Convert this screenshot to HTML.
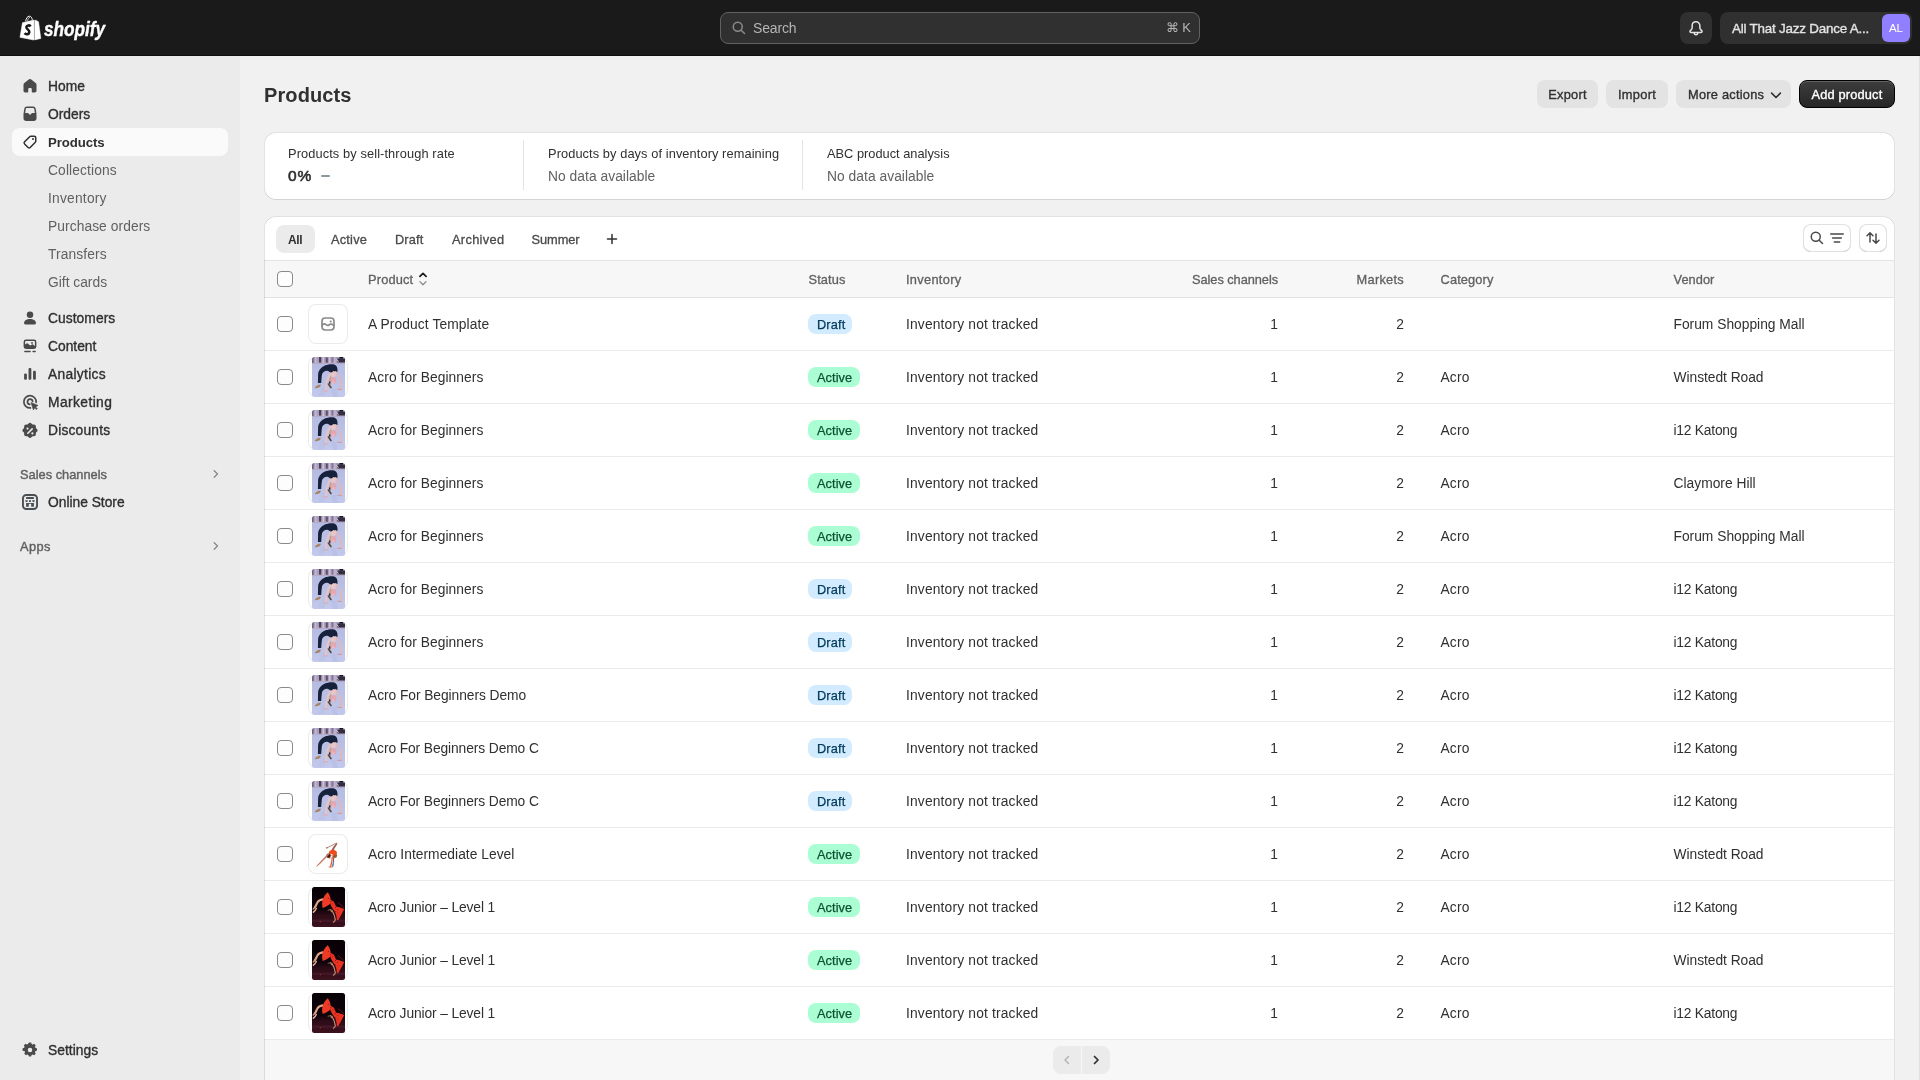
<!DOCTYPE html>
<html lang="en">
<head>
<meta charset="utf-8">
<title>Products</title>
<style>
*{box-sizing:border-box;margin:0;padding:0}
html,body{width:1920px;height:1080px;overflow:hidden;background:#f1f1f1;font-family:"Liberation Sans",sans-serif;color:#303030;font-size:13.5px}
svg{display:block}
/* top bar */
#top{will-change:transform;position:absolute;left:0;top:0;width:1920px;height:56px;background:#1a1a1a;box-shadow:inset 0 -1px 0 #0e0e0e}
#logo{position:absolute;left:18px;top:12px}
#word{-webkit-text-stroke:.4px #fff;position:absolute;left:44px;top:15px;font-size:20px;line-height:28px;font-weight:700;font-style:italic;color:#fff;transform:scaleX(.86);transform-origin:0 0;white-space:nowrap}
#search{position:absolute;left:720px;top:12px;width:480px;height:32px;border-radius:8px;background:#303030;border:1px solid #616161}
#search svg{position:absolute;left:8px;top:5px}
#search .ph{position:absolute;left:32px;top:0;line-height:30px;font-size:14px;color:#b5b5b5}
#search .kb{position:absolute;right:8px;top:0;line-height:30px;font-size:13px;color:#b5b5b5}
#bell{position:absolute;left:1680px;top:12px;width:32px;height:32px;border-radius:8px;background:#303030}
#store{position:absolute;left:1720px;top:12px;width:192px;height:32px;border-radius:8px;background:#303030}
#store .nm{position:absolute;left:12px;top:1px;line-height:32px;font-size:13.4px;font-weight:400;-webkit-text-stroke:.35px #e3e3e3;color:#e3e3e3;white-space:nowrap}
#store .av{position:absolute;right:2px;top:2px;width:28px;height:28px;border-radius:6px;background:#9080ff;color:#fff;font-size:11.5px;line-height:28px;text-align:center}
/* sidebar */
#side{will-change:transform;position:absolute;left:0;top:56px;width:240px;height:1024px;background:#ebebeb}
.nav{position:absolute;left:12px;width:216px;height:28px;border-radius:8px}
.nav.sel{background:#fafafa}
.nav .t{position:absolute;left:36px;top:1px;line-height:28px;font-size:13.8px;font-weight:400;-webkit-text-stroke:.35px #303030;color:#303030;white-space:nowrap}
.nav.sel .t{font-size:13.2px;font-weight:700;-webkit-text-stroke:0}
.nav.sub .t{font-weight:400;color:#616161;font-size:13.8px;-webkit-text-stroke:0}
.nav svg{position:absolute;left:8px;top:4px}
.sec{position:absolute;left:20px;font-size:12.8px;font-weight:400;-webkit-text-stroke:.4px #616161;color:#616161;line-height:16px;white-space:nowrap}
/* main */
h1{position:absolute;left:264px;top:83px;font-size:20px;line-height:24px;font-weight:700;color:#303030;letter-spacing:-.1px}
.btn{position:absolute;top:80px;height:28px;border-radius:8px;background:#e3e3e3;font-size:12.8px;font-weight:400;-webkit-text-stroke:.35px currentColor;color:#303030;line-height:30px;text-align:center;white-space:nowrap}
.btn.pri{background:linear-gradient(#3d3d3d,#262626);color:#fff;border:1px solid #000;line-height:28px;box-shadow:inset 0 1px 0 rgba(255,255,255,.2)}
.card{position:absolute;background:#fff;border-radius:12px;overflow:hidden}
.card:after{content:'';position:absolute;left:0;top:0;right:0;bottom:0;border-radius:12px;pointer-events:none;box-shadow:inset 1px 0 0 rgba(0,0,0,.11),inset -1px 0 0 rgba(0,0,0,.11),inset 0 -1px 0 rgba(0,0,0,.17),inset 0 1px 0 rgba(190,190,190,.45)}
.st{position:absolute;top:0;height:67px}
.st .a{position:absolute;left:0;top:14px;font-size:12.8px;line-height:16px;color:#303030;white-space:nowrap}
.st .b{position:absolute;left:0;top:36px;font-size:13.8px;line-height:18px;color:#616161;white-space:nowrap}
.st .b.big{color:#303030;font-weight:400;-webkit-text-stroke:.6px #303030;font-size:15.5px;top:35px}
.vr{position:absolute;top:8px;width:1px;height:50px;background:#e3e3e3}
/* table */
.tab{position:absolute;top:9px;height:28px;line-height:30px;font-size:12.8px;font-weight:400;-webkit-text-stroke:.3px currentColor;color:#4a4a4a;white-space:nowrap;border-radius:8px;padding:0 12px}
.tab.on{background:#ebebeb;color:#303030;font-size:12px;font-weight:700;-webkit-text-stroke:0}
.hl{position:absolute;left:0;width:1630px;height:1px;background:#e3e3e3}
#thead{position:absolute;left:0;top:45px;width:1630px;height:36px;background:#f7f7f7}
#thead span.h{position:absolute;top:1px;line-height:36px;font-size:12.8px;font-weight:400;-webkit-text-stroke:.3px #616161;color:#616161;white-space:nowrap}
.cb{position:absolute;left:13px;width:16px;height:16px;border:1px solid #8a8a8a;border-radius:4px;background:#fdfdfd}
.row{position:absolute;left:0;width:1630px;height:53px;border-bottom:1px solid #ebebeb;background:#fff}
.row .cb{top:18px}
.row .c{position:absolute;top:1px;line-height:52px;white-space:nowrap;font-size:13.8px;color:#303030}
.row .nm{left:104px}
.row .inv{left:642px}
.row .n1{right:616px}
.row .n2{right:490px}
.row .cat{left:1176.500px}
.row .ven{left:1409.500px}
.th{position:absolute;left:44px;top:6px;width:40px;height:40px;border-radius:8px}
.th.bd{box-shadow:inset 0 0 0 1px #ebebeb}
.th .im{position:absolute;left:4px;top:0}
.bg{position:absolute;left:544px;top:16px;height:20px;line-height:21px;border-radius:8px;font-size:12.8px;font-weight:400;-webkit-text-stroke:.25px currentColor;padding:0 0 0 9px;white-space:nowrap}
.bg.draft{width:44px}.bg.active{width:52px}
.bg.draft{background:#d2ebff;color:#003a5a}
.bg.active{background:#abfdd3;color:#0c5132}
#foot{position:absolute;left:0;top:824px;width:1630px;height:60px;background:#f7f7f7}
.pg{position:absolute;top:6px;height:28px;width:28px;background:#ebebeb}
.ib{position:absolute;top:8px;height:28px;border-radius:8px;background:#fff;box-shadow:inset 0 0 0 1px #e0e0e0, inset 0 -1px 0 #b8b8b8}

#main{position:absolute;left:0;top:0;width:1920px;height:1080px;will-change:transform;overflow:hidden}
.md{font-weight:400!important;-webkit-text-stroke:.35px currentColor}
.ib svg{position:absolute;top:4px}
#tbl:after{bottom:-16px}
</style>
</head>
<body>
<svg width="0" height="0" style="position:absolute">
<defs>
<filter id="bl" x="-10%" y="-10%" width="120%" height="120%"><feGaussianBlur stdDeviation="0.55"/></filter>
<filter id="bl2" x="-10%" y="-10%" width="120%" height="120%"><feGaussianBlur stdDeviation="0.3"/></filter>
<linearGradient id="gA" x1="0" y1="0" x2="0" y2="1"><stop offset="0" stop-color="#b3b8de"/><stop offset="1" stop-color="#c2c9ec"/></linearGradient>
<linearGradient id="gC" x1="0" y1="0" x2="0" y2="1"><stop offset="0" stop-color="#070106"/><stop offset=".55" stop-color="#0d030a"/><stop offset=".7" stop-color="#2c0b17"/><stop offset="1" stop-color="#3c121e"/></linearGradient>
<clipPath id="cpI"><rect x="0" y="0" width="33" height="40" rx="2.500"/></clipPath>
<symbol id="thA" viewBox="0 0 33 40">
 <g clip-path="url(#cpI)">
 <rect width="33" height="40" fill="url(#gA)"/>
 <g filter="url(#bl)">
  <rect x="-1" y="-1" width="35" height="7.300" fill="#a89dbf"/>
  <rect x="-1" y="4.600" width="35" height="1.800" fill="#b4a3bb"/>
  <rect x="0" y="0" width="1.600" height="6" fill="#6c6284"/><rect x="3.200" y="0" width="1.200" height="6" fill="#cdbdd0"/>
  <rect x="7" y="0" width="2.200" height="5.600" fill="#4a4459"/><rect x="10.600" y="0" width="1.400" height="6" fill="#d6c2d2"/>
  <rect x="13.800" y="0.500" width="2" height="5.200" fill="#5a5268"/><rect x="17" y="0" width="1.400" height="6" fill="#d2c0d4"/>
  <rect x="19.600" y="0" width="1.600" height="5.500" fill="#80759a"/><rect x="22.300" y="0" width="1.300" height="6" fill="#cbb9cf"/>
  <rect x="25.500" y="1.500" width="7.500" height="4" fill="#322e40"/><rect x="27.500" y="-1" width="3.500" height="2.600" fill="#14131c"/>
  <path d="M24.300 2.500l2.500 2" stroke="#e8dce8" stroke-width=".800"/>
  <!-- floor reflections -->
  <path d="M9 30l-3 9h6l3-9Z" fill="#b9c1e6" opacity=".7"/><path d="M19 32l2 8h5l-2-8Z" fill="#b6bde2" opacity=".6"/>
  <!-- dark body arch -->
  <path d="M5.900 26 6.100 17.200c.3-3.800 3.200-7 6.800-8.600 2.800-1.300 6.400-1.900 9.300-1.100 2 .600 3.100 2.600 3.300 4.900l-.1 2.700c-1.500.400-2.600-.300-3.900-.400l-2.500 1.900c-.9-1.400-2.300-2.600-3.900-2.800-2.200-.200-4.200 1.100-5 3.200-.6 2.900-.6 6-.9 9Z" fill="#18203a"/>
  <!-- skin arms -->
  <path d="M23.800 15c2.100 2.500 3.800 6.300 4.900 10.200.6 2.200.9 4.500.7 6.800" fill="none" stroke="#dfb8bc" stroke-width="1.900" stroke-linecap="round"/>
  <path d="M18.300 16.200c-1.500 2.500-2.700 5.700-3.400 9-.5 2.600-.9 5.400-1.100 8.200" fill="none" stroke="#e6c4c4" stroke-width="1.900" stroke-linecap="round"/>
  <path d="M19 15.800l2.600-1.800 2.600 1-.9 4.800h-4Z" fill="#e8c6c6"/>
  <!-- head + hair -->
  <path d="M18.400 19.200c-1.200 2-1.500 4.800-.7 7l1.800-1.500-.2-5Z" fill="#bfa07e"/>
  <ellipse cx="21.500" cy="23.400" rx="2.900" ry="3.300" fill="#e2a7b2"/>
  <ellipse cx="21.300" cy="25.300" rx="1.700" ry="1.100" fill="#eeb9c2"/>
  <path d="M16.900 24.400c0 1.500.500 2.500 1.500 3v-3Z" fill="#1c2238"/>
  <!-- feet/hands -->
  <path d="M2.900 30.400c1.500-1.700 3.600-2.700 5.700-2.800.6 1.400-.5 2.400-1.600 2.800-1.300.600-2.700.9-4.100.8Z" fill="#a98464"/>
  <path d="M16.400 27c1 1.300 2 2.500 2.600 3.600" fill="none" stroke="#5a4232" stroke-width="1.600" stroke-linecap="round"/>
  <path d="M11.800 33.800h3.600" stroke="#d8aeb4" stroke-width="1.300" stroke-linecap="round"/>
  <path d="M25.800 32.400h3.400" stroke="#cf9ea6" stroke-width="1.300" stroke-linecap="round"/>
 </g>
 </g>
</symbol>
<symbol id="thB" viewBox="0 0 40 40">
 <g filter="url(#bl2)">
  <path d="M22.600 17.600c1.300-2.900 3.400-5.800 5.300-8.300.5-.7 1.400-.9 1.500-.3.100.7-.3 1.400-.7 2-1.500 2.300-2.900 4.700-3.900 7.200Z" fill="#a06254"/>
  <path d="M18.300 13.900c2.700-.900 5.900-2.400 9-4.400" fill="none" stroke="#b0766a" stroke-width=".900" stroke-linecap="round"/>
  <path d="M18 13.300l2.200.2-.3 1-2.100-.2Z" fill="#b87a6c"/>
  <ellipse cx="26.700" cy="21.500" rx="2.400" ry="2.500" fill="#8f5e2c"/>
  <path d="M21.200 17.500c2.100-1.900 5.300-1.900 7.300-.1.800.800.700 2-.1 2.700l-3.300 2.100c-1.300-.100-2.700-1.100-3.700-2.300-.6-.7-.7-1.800-.2-2.400Z" fill="#f2481a"/>
  <path d="M22.700 19.600l2.600 1.400-1.300.8-2.100-1.200Z" fill="#fff5f0"/>
  <ellipse cx="20.600" cy="21.700" rx="2.200" ry="2.300" fill="#45180a"/>
  <path d="M20.600 24c.6.400 1.300.5 2 .2" fill="none" stroke="#c27a68" stroke-width=".900"/>
  <path d="M20.300 19.300c-3.600 3.700-7.600 8.300-11.700 12.500-.5.500-.2 1 .4.700 4.400-3.700 8.600-8 12.400-12.300Z" fill="#c27868"/>
  <path d="M24.300 23.200c-.2 3.300-.9 6.500-1.800 9.500" fill="none" stroke="#ee5634" stroke-width="1.300" stroke-linecap="round"/>
  <path d="M25.600 23.800c.3 2.800-.1 5.900-1.100 8.700" fill="none" stroke="#7a5e62" stroke-width="1.100" stroke-linecap="round"/>
  <path d="M25.500 28.600c0 1.200-.3 2.500-.8 3.700" fill="none" stroke="#5c96c8" stroke-width="1.300" stroke-linecap="round"/>
  <path d="M21 33h3.300" stroke="#e8765e" stroke-width="1" stroke-linecap="round"/>
 </g>
</symbol>
<symbol id="thC" viewBox="0 0 33 40">
 <g clip-path="url(#cpI)">
 <rect width="33" height="40" fill="url(#gC)"/>
 <g filter="url(#bl)">
  <rect x="-1" y="32.500" width="35" height="2.600" fill="#46182a" opacity=".8"/>
  <path d="M26 15.500l6 5.200" stroke="#8a1220" stroke-width=".800"/>
  <!-- arms / upper body skin -->
  <path d="M11 12.400c-2.300.3-4.600 1.200-5.600 3-.9 1.800-1.500 3.600-2.700 5.100" fill="none" stroke="#e0a488" stroke-width="2.100" stroke-linecap="round"/>
  <path d="M3.500 19.500c-.8 1.200-1.600 1.900-2.300 2.500" fill="none" stroke="#dc9e84" stroke-width="1.200" stroke-linecap="round"/>
  <path d="M4.300 21.500c-.7 1.600-1.800 2.800-2.900 3.700" fill="none" stroke="#e4b094" stroke-width="1.500" stroke-linecap="round"/>
  <!-- red skirt upper -->
  <path d="M15.800 5.200c1.700 2.300 2.800 5.200 3 8.200-.1 1.300-.4 2.600-.9 3.600-2 1.700-4.600 3-7.100 3.900-.9-2.400-.9-5.300-.1-8.100.9-3 2.800-5.800 5.100-7.600Z" fill="#ee3a26"/>
  <!-- red body lower -->
  <path d="M17.600 12.900c2.300-.1 4 1.100 5 3.100.5 1.200.8 2.500 1.400 3.500 2.700.5 5.500 1.400 8.200 2.400-1.400 3.400-3.700 7.100-5.900 11l-1.500.3c.1-3.700-.8-7.100-2.600-9.500-1.300-1.600-2.600-3.600-3.300-5.500-.7-1.800-1.400-3.700-1.300-5.300Z" fill="#e93322"/>
  <circle cx="16.300" cy="11.500" r=".550" fill="#8a1a14"/><circle cx="18.800" cy="14.600" r=".550" fill="#8a1a14"/><circle cx="20.800" cy="16.800" r=".500" fill="#8a1a14"/><circle cx="23.500" cy="20.600" r=".600" fill="#8a1a14"/><circle cx="25.600" cy="22.500" r=".500" fill="#8a1a14"/><circle cx="23.700" cy="24.300" r=".500" fill="#8a1a14"/><circle cx="26" cy="26" r=".450" fill="#8a1a14"/>
  <!-- leg -->
  <path d="M19.700 23.200c1.800 2.500 3.100 5.800 3.600 9.500 0 1-.9 1.900-1.900 2.500" fill="none" stroke="#c48e70" stroke-width="1.200" stroke-linecap="round"/>
  <path d="M16.200 23.200c.4-.4 1-.5 1.600-.3" stroke="#6a5030" stroke-width="1.300" stroke-linecap="round"/>
  <path d="M18.600 22.600c.5.600.8 1.300.8 2" stroke="#b88a68" stroke-width="1.200" stroke-linecap="round"/>
  <circle cx="8.300" cy="34.600" r=".600" fill="#c03a28"/>
 </g>
 </g>
</symbol>
<symbol id="shbag" viewBox="18 12 26 30">
 <path d="M25.700 21.300c.2-2.900 1.800-5.100 3.700-5.100 1.500 0 2.600 1.400 2.900 3.600" fill="none" stroke="#fff" stroke-width="1"/>
 <path d="M27.600 20.800c.3-1.900 1.200-3.300 2.400-3.500" fill="none" stroke="#fff" stroke-width=".800"/>
 <path d="M22.500 22.700 33.950 20.100V40L20 37.300Z" fill="#fff" stroke="#fff" stroke-width=".600" stroke-linejoin="round"/>
 <path d="M34.700 20.100 36.500 20.400 38.600 21.800 40.900 38.500 34.700 39.950Z" fill="#fff" stroke="#fff" stroke-width=".400" stroke-linejoin="round"/>
 <path d="M30.700 26.400c-1.100-1.300-3.900-1.500-4.300.6-.4 2.200 3.300 2.600 2.900 5.200-.4 2.400-3.400 2.500-4.700 1" fill="none" stroke="#1a1a1a" stroke-width="2.600"/>
</symbol>
</defs>
</svg>

<div id="top">
  <svg id="logo" width="26" height="30" viewBox="0 0 26 30"><use href="#shbag"/></svg>
  <div id="word">shopify</div>
  <div id="search"><svg width="20" height="20" viewBox="0 0 20 20" fill="none"><circle cx="8.750" cy="8.750" r="4.500" stroke="#8a8a8a" stroke-width="1.500"/><path d="m12.200 12.200 3.300 3.300" stroke="#8a8a8a" stroke-width="1.500" stroke-linecap="round"/></svg><span class="ph" style="letter-spacing:-0.14px">Search</span><span class="kb">⌘ K</span></div>
  <div id="bell"><svg width="20" height="20" viewBox="0 0 20 20" fill="none" style="position:absolute;left:6px;top:6px"><path d="M10 3.850c-2.300 0-3.850 1.750-3.850 4v1.900c0 .700-.300 1.300-.750 1.800l-1.100 1.100c-.700.700-.200 1.850.800 1.850h9.800c1 0 1.500-1.150.800-1.850l-1.100-1.100a2.600 2.600 0 0 1-.750-1.800V7.850c0-2.250-1.550-4-3.850-4Z" stroke="#e3e3e3" stroke-width="1.500" stroke-linejoin="round"/><path d="M8.100 14.900c.200 1.100.950 1.900 1.900 1.900s1.700-.800 1.900-1.900" stroke="#e3e3e3" stroke-width="1.500" stroke-linecap="round"/></svg></div>
  <div id="store"><span class="nm" style="letter-spacing:-0.2px">All That Jazz Dance A...</span><span class="av">AL</span></div>
</div>
<div id="side">
<div class="nav" style="top:16px"><svg width="20" height="20" viewBox="0 0 20 20" fill="#4a4a4a" ><path d="M10.92 3.26a1.5 1.5 0 0 0-1.84 0L4.33 6.95A2.15 2.15 0 0 0 3.5 8.65v6.1c0 .97.78 1.75 1.75 1.75H7.5a.75.75 0 0 0 .75-.75V13a1 1 0 0 1 1-1h1.5a1 1 0 0 1 1 1v2.75c0 .41.34.75.75.75h2.25c.97 0 1.75-.78 1.75-1.75v-6.1c0-.66-.31-1.29-.83-1.7l-4.75-3.69Z"/></svg><span class="t" style="letter-spacing:0.08px">Home</span></div>
<div class="nav" style="top:44px"><svg width="20" height="20" viewBox="0 0 20 20" fill="#4a4a4a" ><path fill-rule="evenodd" d="M4.26 4.85A2.75 2.75 0 0 1 6.98 2.5h6.04a2.75 2.75 0 0 1 2.72 2.35l.66 4.46c.06.42.1.85.1 1.28v3.66A2.75 2.75 0 0 1 13.75 17h-7.5a2.75 2.75 0 0 1-2.75-2.75v-3.66c0-.43.03-.86.1-1.28l.66-4.46ZM6.98 4c-.62 0-1.15.45-1.24 1.07L5.16 9h2.48c.54 0 1.02.34 1.19.85l.16.48c.03.1.13.17.23.17h1.56c.1 0 .2-.07.24-.17l.15-.48c.17-.5.65-.85 1.19-.85h2.48l-.58-3.93A1.25 1.25 0 0 0 13.02 4H6.98Z"/></svg><span class="t">Orders</span></div>
<div class="nav sel" style="top:72px"><svg width="20" height="20" viewBox="0 0 20 20" fill="none" ><path d="M10.75 4.25h3.5c.83 0 1.5.67 1.5 1.5v3.5c0 .4-.16.78-.44 1.06l-5.1 5.1a1.5 1.5 0 0 1-2.12 0l-3.5-3.5a1.5 1.5 0 0 1 0-2.12l5.1-5.1c.28-.28.66-.44 1.06-.44Z" fill="none" stroke="#303030" stroke-width="1.5"/><circle cx="13" cy="7" r="1" fill="#303030"/></svg><span class="t" style="letter-spacing:-0.07px">Products</span></div>
<div class="nav sub" style="top:100px"><span class="t" style="letter-spacing:0.12px">Collections</span></div>
<div class="nav sub" style="top:128px"><span class="t" style="letter-spacing:0.22px">Inventory</span></div>
<div class="nav sub" style="top:156px"><span class="t" style="letter-spacing:0.07px">Purchase orders</span></div>
<div class="nav sub" style="top:184px"><span class="t" style="letter-spacing:0.12px">Transfers</span></div>
<div class="nav sub" style="top:212px"><span class="t">Gift cards</span></div>
<div class="nav" style="top:248px"><svg width="20" height="20" viewBox="0 0 20 20" fill="#4a4a4a" ><circle cx="10" cy="6.75" r="3.25"/><path d="M4 15.1c0-2.5 2.7-4.1 6-4.1s6 1.6 6 4.1c0 .77-.63 1.4-1.4 1.4H5.4c-.77 0-1.4-.63-1.4-1.4Z"/></svg><span class="t" style="letter-spacing:0.06px">Customers</span></div>
<div class="nav" style="top:276px"><svg width="20" height="20" viewBox="0 0 20 20" fill="#4a4a4a" ><path fill-rule="evenodd" d="M6 3.500A2.400 2.400 0 0 0 3.600 5.900v4.600A2.400 2.400 0 0 0 6 12.900h8a2.400 2.400 0 0 0 2.400-2.400V5.900A2.400 2.400 0 0 0 14 3.500H6ZM5.100 8.600l1.500-1.200a.9.900 0 0 1 1.150 0l2.350 2.200 1.900-1.200a.9.900 0 0 1 1.050.1l1.850 1.500V5.900c0-.5-.4-.9-.9-.9H6c-.5 0-.9.400-.9.900v2.700Zm7.800-1.700a.9.900 0 1 1-1.800 0 .9.900 0 0 1 1.800 0Z"/><rect x="4.100" y="14.850" width="6.700" height="1.500" rx=".750"/><rect x="12.300" y="14.850" width="3.600" height="1.500" rx=".750"/></svg><span class="t">Content</span></div>
<div class="nav" style="top:304px"><svg width="20" height="20" viewBox="0 0 20 20" fill="#4a4a4a" ><rect x="4.100" y="9.600" width="2.800" height="6.200" rx="1.100"/><rect x="8.550" y="4" width="2.800" height="11.800" rx="1.100"/><rect x="13.050" y="6.800" width="2.800" height="9" rx="1.100"/></svg><span class="t" style="letter-spacing:0.31px">Analytics</span></div>
<div class="nav" style="top:332px"><svg width="20" height="20" viewBox="0 0 20 20" fill="#4a4a4a" ><path d="M16.150 10.300A6.150 6.150 0 1 0 10.400 15.950" fill="none" stroke="#4a4a4a" stroke-width="1.700" stroke-linecap="round"/><path d="M12.650 9.500A2.600 2.600 0 1 0 9.800 12.400" fill="none" stroke="#4a4a4a" stroke-width="1.700" stroke-linecap="round"/><path d="M11 10.500 18 13.400 15.600 14.900 17.300 16.800 16.300 17.500 14.600 15.800 13.400 18Z" stroke="#4a4a4a" stroke-width=".600" stroke-linejoin="round"/></svg><span class="t" style="letter-spacing:0.41px">Marketing</span></div>
<div class="nav" style="top:360px"><svg width="20" height="20" viewBox="0 0 20 20" fill="#4a4a4a" ><path transform="translate(10 11) scale(1.07) translate(-10 -10)" fill-rule="evenodd" d="M11.570 3.170a2.100 2.100 0 0 0-3.140 0l-.5.560a.6.600 0 0 1-.480.200l-.750-.04A2.100 2.100 0 0 0 4.480 6.100l.04.750a.6.600 0 0 1-.2.480l-.560.500a2.100 2.100 0 0 0 0 3.140l.560.500a.6.600 0 0 1 .2.480l-.04.750a2.100 2.100 0 0 0 2.220 2.220l.750-.04a.6.600 0 0 1 .480.200l.5.560a2.100 2.100 0 0 0 3.140 0l.5-.560a.6.600 0 0 1 .480-.2l.750.040a2.100 2.100 0 0 0 2.220-2.220l-.04-.750a.6.600 0 0 1 .2-.480l.560-.5a2.100 2.100 0 0 0 0-3.140l-.560-.5a.6.600 0 0 1-.2-.480l.04-.750A2.100 2.100 0 0 0 13.300 3.880l-.750.040a.6.600 0 0 1-.480-.2l-.5-.550ZM8.700 7.750a1 1 0 1 1-2 0 1 1 0 0 1 2 0Zm3.830-.22a.75.750 0 0 1 0 1.060l-4 4a.75.750 0 1 1-1.060-1.060l4-4a.75.750 0 0 1 1.060 0Zm-.280 5.720a1 1 0 1 0 0-2 1 1 0 0 0 0 2Z"/></svg><span class="t" style="letter-spacing:0.19px">Discounts</span></div>
<div class="sec" style="top:411px;letter-spacing:0.01px">Sales channels</div><svg style="position:absolute;left:206px;top:408px" width="20" height="20" viewBox="0 0 20 20" fill="none"><path d="M8.250 6.750 11.500 10l-3.250 3.250" stroke="#8a8a8a" stroke-width="1.400" stroke-linecap="round" stroke-linejoin="round"/></svg>
<div class="nav" style="top:432px"><svg width="20" height="20" viewBox="0 0 20 20" fill="none" ><rect x="2.950" y="2.950" width="14.100" height="14.100" rx="3.400" fill="none" stroke="#4a4f53" stroke-width="1.900"/><rect x="6" y="5.100" width="8" height="1.800" rx=".400" fill="#4a4f53"/><path d="M5.100 8.200h2.800l-.600 1.700h-1.500ZM9 8.200h2v1.700h-2ZM12.100 8.200h2.800l-.700 1.700h-1.500Z" fill="#4a4f53"/><path d="M6.100 11h7.800v3.700h-2.700v-2.300a.6.600 0 0 0-.600-.600h-1.200a.6.600 0 0 0-.600.600v2.300h-2.700Z" fill="#4a4f53"/></svg><span class="t" style="letter-spacing:-0.01px">Online Store</span></div>
<div class="sec" style="top:483px;letter-spacing:0.37px">Apps</div><svg style="position:absolute;left:206px;top:480px" width="20" height="20" viewBox="0 0 20 20" fill="none"><path d="M8.250 6.750 11.500 10l-3.250 3.250" stroke="#8a8a8a" stroke-width="1.400" stroke-linecap="round" stroke-linejoin="round"/></svg>
<div class="nav" style="top:980px"><svg width="20" height="20" viewBox="0 0 20 20" fill="#4a4a4a" ><path fill-rule="evenodd" d="M8.500 3.500a1 1 0 0 1 1-1h1a1 1 0 0 1 1 1v.600c.450.120.880.300 1.270.530l.430-.430a1 1 0 0 1 1.410 0l.710.710a1 1 0 0 1 0 1.410l-.430.430c.230.390.410.820.530 1.270h.580a1 1 0 0 1 1 1v1a1 1 0 0 1-1 1h-.600c-.120.450-.3.880-.530 1.270l.430.430a1 1 0 0 1 0 1.410l-.710.710a1 1 0 0 1-1.410 0l-.430-.430c-.390.230-.820.410-1.270.530v.580a1 1 0 0 1-1 1h-1a1 1 0 0 1-1-1v-.600a5.200 5.200 0 0 1-1.270-.530l-.430.430a1 1 0 0 1-1.410 0l-.710-.710a1 1 0 0 1 0-1.410l.430-.430a5.200 5.200 0 0 1-.530-1.270H3.500a1 1 0 0 1-1-1v-1a1 1 0 0 1 1-1h.600c.120-.450.3-.880.530-1.270l-.430-.430a1 1 0 0 1 0-1.410l.710-.710a1 1 0 0 1 1.410 0l.430.430c.390-.230.820-.410 1.270-.530V3.500ZM10 12.250a2.250 2.250 0 1 0 0-4.500 2.250 2.250 0 0 0 0 4.500Z"/></svg><span class="t" style="letter-spacing:0.04px">Settings</span></div>
</div>
<div id="main">
<div id="rstrip" style="position:absolute;left:1919px;top:56px;width:1px;height:1024px;background:#e0e0e0"></div>
<h1 style="letter-spacing:0.11px">Products</h1>
<div class="btn" style="left:1537px;width:61px;letter-spacing:0.24px">Export</div>
<div class="btn" style="left:1606px;width:62px;letter-spacing:0.32px">Import</div>
<div class="btn" style="left:1676px;width:115px;text-align:left;padding-left:12px;letter-spacing:0.24px">More actions<svg width="20" height="20" viewBox="0 0 20 20" fill="none" style="position:absolute;left:89.500px;top:5px"><path d="m5.600 8.100 4.400 4.400 4.400-4.400" stroke="#303030" stroke-width="1.600" stroke-linecap="round" stroke-linejoin="round"/></svg></div>
<div class="btn pri" style="left:1799px;width:96px;letter-spacing:0.16px">Add product</div>
<div class="card" id="stats" style="left:264px;top:132px;width:1631px;height:68px">
  <div class="st" style="left:24px"><span class="a" style="letter-spacing:0.11px">Products by sell-through rate</span><span class="b big" style="letter-spacing:.9px">0%</span><span style="position:absolute;left:32.500px;top:43px;width:9.500px;height:1.500px;background:#8a979f;border-radius:1px"></span></div>
  <div class="vr" style="left:259px"></div>
  <div class="st" style="left:284px"><span class="a" style="letter-spacing:0.09px">Products by days of inventory remaining</span><span class="b" style="letter-spacing:0.04px">No data available</span></div>
  <div class="vr" style="left:538px"></div>
  <div class="st" style="left:563px"><span class="a" style="letter-spacing:0.01px">ABC product analysis</span><span class="b" style="letter-spacing:0.04px">No data available</span></div>
</div>
<div class="card" id="tbl" style="left:264px;top:216px;width:1631px;height:864px;border-bottom-left-radius:0;border-bottom-right-radius:0">
  <span class="tab on" style="left:12px;width:39px;letter-spacing:-0.38px">All</span>
  <span class="tab" style="left:55px;letter-spacing:0.2px">Active</span>
  <span class="tab" style="left:119px;letter-spacing:0.12px">Draft</span>
  <span class="tab" style="left:176px;letter-spacing:0.32px">Archived</span>
  <span class="tab" style="left:255.500px;letter-spacing:-0.05px">Summer</span>
  <svg width="20" height="20" viewBox="0 0 20 20" fill="none" style="position:absolute;left:338px;top:13px"><path d="M10 5.500v9M5.500 10h9" stroke="#303030" stroke-width="1.500" stroke-linecap="round"/></svg>
  <div class="ib" style="left:1539px;width:48px"><span style="position:absolute;left:4px;top:0"><svg width="20" height="20" viewBox="0 0 20 20" fill="none"><circle cx="8.750" cy="8.750" r="4.500" stroke="#4a4a4a" stroke-width="1.500"/><path d="m12.200 12.200 3.300 3.300" stroke="#4a4a4a" stroke-width="1.500" stroke-linecap="round"/></svg></span><span style="position:absolute;left:24px;top:0"><svg width="20" height="20" viewBox="0 0 20 20" fill="none"><path d="M3.750 6h12.500M5.600 10h8.800M7.300 14h5.400" stroke="#4a4a4a" stroke-width="1.500" stroke-linecap="round"/></svg></span></div>
  <div class="ib" style="left:1595px;width:28px"><span style="position:absolute;left:4px;top:0"><svg width="20" height="20" viewBox="0 0 20 20" fill="none"><path d="M7 14V4.700m0 0L4 7.700M7 4.700l3 3M13 6v9.300m0 0 3-3m-3 3-3-3" stroke="#4a4a4a" stroke-width="1.500" stroke-linecap="round" stroke-linejoin="round"/></svg></span></div>
  <div class="hl" style="top:44px"></div>
  <div id="thead">
    <span class="cb" style="top:10px"></span>
    <span class="h" style="left:104px;letter-spacing:0.17px">Product</span>
    <svg width="12" height="18" viewBox="0 0 12 18" fill="none" style="position:absolute;left:153px;top:9px"><path d="m2.900 6.400 3.100-3.100 3.100 3.100" stroke="#1a1a1a" stroke-width="1.700" stroke-linecap="round" stroke-linejoin="round"/><path d="m2.900 11.600 3.100 3.100 3.100-3.100" stroke="#8a8a8a" stroke-width="1.300" stroke-linecap="round" stroke-linejoin="round"/></svg>
    <span class="h" style="left:544.500px;letter-spacing:0.1px">Status</span>
    <span class="h" style="left:642px;letter-spacing:0.31px">Inventory</span>
    <span class="h" style="right:616px;letter-spacing:-0.06px">Sales channels</span>
    <span class="h" style="right:490px;letter-spacing:0.27px">Markets</span>
    <span class="h" style="left:1176.500px;letter-spacing:0.14px">Category</span>
    <span class="h" style="left:1409.500px;letter-spacing:0.05px">Vendor</span>
  </div>
  <div class="hl" style="top:81px"></div>
<div class="row" style="top:82px"><span class="cb"></span><span class="th bd"><svg width="20" height="20" viewBox="0 0 20 20" fill="none" style="position:absolute;left:10px;top:10px"><rect x="4" y="4" width="12" height="12" rx="3.200" stroke="#8a8a8a" stroke-width="1.700"/><circle cx="12.700" cy="7.500" r="1.100" fill="#8a8a8a"/><path d="M4.300 11.300c1.300-1.700 2.500-1.900 3.600-.800 1.100 1.100 1.900 1.400 3 .500 1.100-.900 2.800-1.200 4.800.400" stroke="#8a8a8a" stroke-width="1.700" stroke-linecap="round"/></svg></span><span class="c nm" style="letter-spacing:0.1px">A Product Template</span><span class="bg draft" style="letter-spacing:0.12px">Draft</span><span class="c inv" style="letter-spacing:0.17px">Inventory not tracked</span><span class="c n1">1</span><span class="c n2">2</span><span class="c ven">Forum Shopping Mall</span></div>
<div class="row" style="top:135px"><span class="cb"></span><span class="th bd"><svg class="im" width="33" height="40" viewBox="0 0 33 40"><use href="#thA"/></svg></span><span class="c nm" style="letter-spacing:0.06px">Acro for Beginners</span><span class="bg active" style="letter-spacing:0.05px">Active</span><span class="c inv" style="letter-spacing:0.17px">Inventory not tracked</span><span class="c n1">1</span><span class="c n2">2</span><span class="c cat" style="letter-spacing:0.17px">Acro</span><span class="c ven" style="letter-spacing:-0.04px">Winstedt Road</span></div>
<div class="row" style="top:188px"><span class="cb"></span><span class="th bd"><svg class="im" width="33" height="40" viewBox="0 0 33 40"><use href="#thA"/></svg></span><span class="c nm" style="letter-spacing:0.06px">Acro for Beginners</span><span class="bg active" style="letter-spacing:0.05px">Active</span><span class="c inv" style="letter-spacing:0.17px">Inventory not tracked</span><span class="c n1">1</span><span class="c n2">2</span><span class="c cat" style="letter-spacing:0.17px">Acro</span><span class="c ven" style="letter-spacing:-0.22px">i12 Katong</span></div>
<div class="row" style="top:241px"><span class="cb"></span><span class="th bd"><svg class="im" width="33" height="40" viewBox="0 0 33 40"><use href="#thA"/></svg></span><span class="c nm" style="letter-spacing:0.06px">Acro for Beginners</span><span class="bg active" style="letter-spacing:0.05px">Active</span><span class="c inv" style="letter-spacing:0.17px">Inventory not tracked</span><span class="c n1">1</span><span class="c n2">2</span><span class="c cat" style="letter-spacing:0.17px">Acro</span><span class="c ven" style="letter-spacing:0.01px">Claymore Hill</span></div>
<div class="row" style="top:294px"><span class="cb"></span><span class="th bd"><svg class="im" width="33" height="40" viewBox="0 0 33 40"><use href="#thA"/></svg></span><span class="c nm" style="letter-spacing:0.06px">Acro for Beginners</span><span class="bg active" style="letter-spacing:0.05px">Active</span><span class="c inv" style="letter-spacing:0.17px">Inventory not tracked</span><span class="c n1">1</span><span class="c n2">2</span><span class="c cat" style="letter-spacing:0.17px">Acro</span><span class="c ven">Forum Shopping Mall</span></div>
<div class="row" style="top:347px"><span class="cb"></span><span class="th bd"><svg class="im" width="33" height="40" viewBox="0 0 33 40"><use href="#thA"/></svg></span><span class="c nm" style="letter-spacing:0.06px">Acro for Beginners</span><span class="bg draft" style="letter-spacing:0.12px">Draft</span><span class="c inv" style="letter-spacing:0.17px">Inventory not tracked</span><span class="c n1">1</span><span class="c n2">2</span><span class="c cat" style="letter-spacing:0.17px">Acro</span><span class="c ven" style="letter-spacing:-0.22px">i12 Katong</span></div>
<div class="row" style="top:400px"><span class="cb"></span><span class="th bd"><svg class="im" width="33" height="40" viewBox="0 0 33 40"><use href="#thA"/></svg></span><span class="c nm" style="letter-spacing:0.06px">Acro for Beginners</span><span class="bg draft" style="letter-spacing:0.12px">Draft</span><span class="c inv" style="letter-spacing:0.17px">Inventory not tracked</span><span class="c n1">1</span><span class="c n2">2</span><span class="c cat" style="letter-spacing:0.17px">Acro</span><span class="c ven" style="letter-spacing:-0.22px">i12 Katong</span></div>
<div class="row" style="top:453px"><span class="cb"></span><span class="th bd"><svg class="im" width="33" height="40" viewBox="0 0 33 40"><use href="#thA"/></svg></span><span class="c nm" style="letter-spacing:-0.06px">Acro For Beginners Demo</span><span class="bg draft" style="letter-spacing:0.12px">Draft</span><span class="c inv" style="letter-spacing:0.17px">Inventory not tracked</span><span class="c n1">1</span><span class="c n2">2</span><span class="c cat" style="letter-spacing:0.17px">Acro</span><span class="c ven" style="letter-spacing:-0.22px">i12 Katong</span></div>
<div class="row" style="top:506px"><span class="cb"></span><span class="th bd"><svg class="im" width="33" height="40" viewBox="0 0 33 40"><use href="#thA"/></svg></span><span class="c nm" style="letter-spacing:-0.1px">Acro For Beginners Demo C</span><span class="bg draft" style="letter-spacing:0.12px">Draft</span><span class="c inv" style="letter-spacing:0.17px">Inventory not tracked</span><span class="c n1">1</span><span class="c n2">2</span><span class="c cat" style="letter-spacing:0.17px">Acro</span><span class="c ven" style="letter-spacing:-0.22px">i12 Katong</span></div>
<div class="row" style="top:559px"><span class="cb"></span><span class="th bd"><svg class="im" width="33" height="40" viewBox="0 0 33 40"><use href="#thA"/></svg></span><span class="c nm" style="letter-spacing:-0.1px">Acro For Beginners Demo C</span><span class="bg draft" style="letter-spacing:0.12px">Draft</span><span class="c inv" style="letter-spacing:0.17px">Inventory not tracked</span><span class="c n1">1</span><span class="c n2">2</span><span class="c cat" style="letter-spacing:0.17px">Acro</span><span class="c ven" style="letter-spacing:-0.22px">i12 Katong</span></div>
<div class="row" style="top:612px"><span class="cb"></span><span class="th bd"><svg width="40" height="40" viewBox="0 0 40 40"><use href="#thB"/></svg></span><span class="c nm" style="letter-spacing:0.03px">Acro Intermediate Level</span><span class="bg active" style="letter-spacing:0.05px">Active</span><span class="c inv" style="letter-spacing:0.17px">Inventory not tracked</span><span class="c n1">1</span><span class="c n2">2</span><span class="c cat" style="letter-spacing:0.17px">Acro</span><span class="c ven" style="letter-spacing:-0.04px">Winstedt Road</span></div>
<div class="row" style="top:665px"><span class="cb"></span><span class="th bd"><svg class="im" width="33" height="40" viewBox="0 0 33 40"><use href="#thC"/></svg></span><span class="c nm" style="letter-spacing:-0.12px">Acro Junior – Level 1</span><span class="bg active" style="letter-spacing:0.05px">Active</span><span class="c inv" style="letter-spacing:0.17px">Inventory not tracked</span><span class="c n1">1</span><span class="c n2">2</span><span class="c cat" style="letter-spacing:0.17px">Acro</span><span class="c ven" style="letter-spacing:-0.22px">i12 Katong</span></div>
<div class="row" style="top:718px"><span class="cb"></span><span class="th bd"><svg class="im" width="33" height="40" viewBox="0 0 33 40"><use href="#thC"/></svg></span><span class="c nm" style="letter-spacing:-0.12px">Acro Junior – Level 1</span><span class="bg active" style="letter-spacing:0.05px">Active</span><span class="c inv" style="letter-spacing:0.17px">Inventory not tracked</span><span class="c n1">1</span><span class="c n2">2</span><span class="c cat" style="letter-spacing:0.17px">Acro</span><span class="c ven" style="letter-spacing:-0.04px">Winstedt Road</span></div>
<div class="row" style="top:771px"><span class="cb"></span><span class="th bd"><svg class="im" width="33" height="40" viewBox="0 0 33 40"><use href="#thC"/></svg></span><span class="c nm" style="letter-spacing:-0.12px">Acro Junior – Level 1</span><span class="bg active" style="letter-spacing:0.05px">Active</span><span class="c inv" style="letter-spacing:0.17px">Inventory not tracked</span><span class="c n1">1</span><span class="c n2">2</span><span class="c cat" style="letter-spacing:0.17px">Acro</span><span class="c ven" style="letter-spacing:-0.22px">i12 Katong</span></div>

  <div id="foot">
    <div class="pg" style="left:789px;border-radius:8px 0 0 8px"><svg width="20" height="20" viewBox="0 0 20 20" fill="none" style="position:absolute;left:4px;top:4px"><path d="M11.500 6.500 8 10l3.500 3.500" stroke="#b5b5b5" stroke-width="1.500" stroke-linecap="round" stroke-linejoin="round"/></svg></div>
    <div class="pg" style="left:818px;border-radius:0 8px 8px 0"><svg width="20" height="20" viewBox="0 0 20 20" fill="none" style="position:absolute;left:4px;top:4px"><path d="M8.500 6.500 12 10l-3.500 3.500" stroke="#303030" stroke-width="1.700" stroke-linecap="round" stroke-linejoin="round"/></svg></div>
  </div>
</div>
</div>

</body>
</html>
